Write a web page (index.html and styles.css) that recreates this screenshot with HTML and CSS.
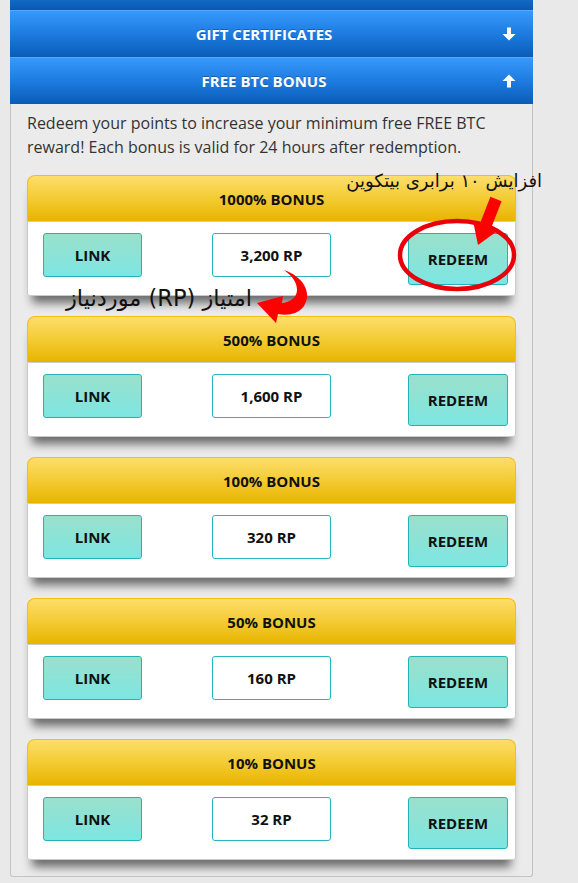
FILE: index.html
```html
<!doctype html>
<html>
<head>
	<meta charset='utf-8'>
	<title>Free BTC Bonus</title>

	<link rel="stylesheet" href="styles.css">
</head>
<body>

	<div class='page'>

		<div class='accordion'>
			<div class='bar bar-stub'></div>

			<div class='bar'>
				<span class='bar-title'>Gift Certificates</span>
				<svg class='bar-icon' viewBox='0 0 14 14'><path d='M5 0.5h4v6.5h4.5L7 13.5 0.5 7H5z' fill='#fff'/></svg>
			</div>

			<div class='bar'>
				<span class='bar-title'>Free BTC Bonus</span>
				<svg class='bar-icon' viewBox='0 0 14 14'><path d='M5 13.5h4V7h4.5L7 0.5 0.5 7H5z' fill='#fff'/></svg>
			</div>

			<div class='panel'>
				<p class='intro'>Redeem your points to increase your minimum free FREE BTC reward! Each bonus is valid for 24 hours after redemption.</p>

				<div class='bonus'>
					<div class='bonus-header'>1000% BONUS</div>
					<div class='bonus-body'>
						<div class='btn btn-link'>LINK</div>
						<div class='points'>3,200 RP</div>
						<div class='btn btn-redeem'>REDEEM</div>
					</div>
				</div>

				<div class='bonus'>
					<div class='bonus-header'>500% BONUS</div>
					<div class='bonus-body'>
						<div class='btn btn-link'>LINK</div>
						<div class='points'>1,600 RP</div>
						<div class='btn btn-redeem'>REDEEM</div>
					</div>
				</div>

				<div class='bonus'>
					<div class='bonus-header'>100% BONUS</div>
					<div class='bonus-body'>
						<div class='btn btn-link'>LINK</div>
						<div class='points'>320 RP</div>
						<div class='btn btn-redeem'>REDEEM</div>
					</div>
				</div>

				<div class='bonus'>
					<div class='bonus-header'>50% BONUS</div>
					<div class='bonus-body'>
						<div class='btn btn-link'>LINK</div>
						<div class='points'>160 RP</div>
						<div class='btn btn-redeem'>REDEEM</div>
					</div>
				</div>

				<div class='bonus'>
					<div class='bonus-header'>10% BONUS</div>
					<div class='bonus-body'>
						<div class='btn btn-link'>LINK</div>
						<div class='points'>32 RP</div>
						<div class='btn btn-redeem'>REDEEM</div>
					</div>
				</div>
			</div>
		</div>

		<!-- hand-drawn annotations on top of the screenshot -->
		<svg class='marks' viewBox='0 0 578 883'>
			<ellipse cx='457' cy='255' rx='57' ry='34' fill='none' stroke='#e8000b' stroke-width='4.5'/>
			<polygon points='501.6,201.2 490.9,228.6 497.4,231.1 478,245 473.2,221.7 479.7,224.2 490.4,196.8' fill='#ff0000'/>
			<path d='M284 270 C302 276 313 292 304 306 C298 314 288 316 278 314 L276 323 L257 303 L283 296 L282 303 C291 302 297 297 297 290 C297 282 292 276 284 270 Z' fill='#ff0000'/>
		</svg>
		<div class='note note-redeem' dir='rtl'>افزایش ۱۰ برابری بیتکوین</div>
		<div class='note note-points' dir='rtl'>امتیاز (RP) موردنیاز</div>

	</div>

</body>
</html>
```

FILE: styles.css
```css
body {
	margin: 0;
	background: #e9e9e9;
	font-family: "Open Sans", "Liberation Sans", sans-serif;
}

.page {
	position: relative;
	width: 578px;
	height: 883px;
	overflow: hidden;
}

.accordion {
	width: 523px;
	margin-left: 10px;
}

/* The blue accordion bars */
.bar {
	display: flex;
	align-items: center;
	justify-content: center;
	height: 46px;
	border-top: 1px solid #5aa8f5;
	padding-right: 15px;
	background: linear-gradient(#3799fd, #1b78dc 55%, #0a5cb6);
	position: relative;
}

.bar-stub {
	height: 10px;
	border-top: 0;
	background: linear-gradient(#1368c6, #0a59b0);
}

.bar-title {
	color: #fff;
	font-weight: bold;
	font-size: 15px;
	text-transform: uppercase;
	text-shadow: 0 -1px 0 rgba(0, 0, 0, 0.25);
}

.bar-icon {
	position: absolute;
	right: 17px;
	top: 16px;
	width: 14px;
	height: 14px;
}

/* The open panel */
.panel {
	background: #ebebeb;
	border: 1px solid #c3c3c3;
	border-top: 0;
	border-radius: 0 0 3px 3px;
	padding: 7px 16px 16px 16px;
}

.intro {
	margin: 0 0 16px 0;
	font-size: 16px;
	line-height: 24px;
	color: #333;
}

/* One bonus card */
.bonus {
	margin-bottom: 20px;
	box-shadow: 0 12px 10px -5px rgba(0, 0, 0, 0.55);
	border-radius: 8px 8px 3px 3px;
}

.bonus:last-child {
	margin-bottom: 0;
}

.bonus-header {
	height: 45px;
	line-height: 47px;
	text-align: center;
	font-weight: bold;
	font-size: 15px;
	color: #111;
	background: linear-gradient(#fede6b, #f3cb33 50%, #e8b400);
	border: 1px solid #f2bf12;
	border-bottom: 0;
	border-radius: 8px 8px 0 0;
}

.bonus-body {
	display: flex;
	align-items: flex-start;
	height: 52px;
	padding: 11px 7px 10px 15px;
	background: #fff;
	border: 1px solid #cbcbcb;
	border-radius: 0 0 3px 3px;
}

.btn,
.points {
	display: flex;
	align-items: center;
	justify-content: center;
	box-sizing: border-box;
	border-radius: 3px;
	font-weight: bold;
	font-size: 15px;
	color: #111;
}

.btn {
	border: 1px solid #22b2b8;
	background: linear-gradient(#9ae0cc, #7de6e2);
}

.btn-link {
	width: 99px;
	height: 44px;
}

.points {
	width: 119px;
	height: 44px;
	margin-left: 70px;
	background: #fff;
	border: 1px solid #26b4bf;
}

.btn-redeem {
	width: 100px;
	height: 52px;
	margin-left: auto;
}

/* Annotations */
.marks {
	position: absolute;
	left: 0;
	top: 0;
	width: 578px;
	height: 883px;
	pointer-events: none;
}

.note {
	position: absolute;
	font-family: "DejaVu Sans", sans-serif;
	color: #111;
	white-space: nowrap;
}

.note-redeem {
	right: 36px;
	top: 170px;
	font-size: 18px;
}

.note-points {
	right: 326px;
	top: 285px;
	font-size: 22.5px;
}
```
